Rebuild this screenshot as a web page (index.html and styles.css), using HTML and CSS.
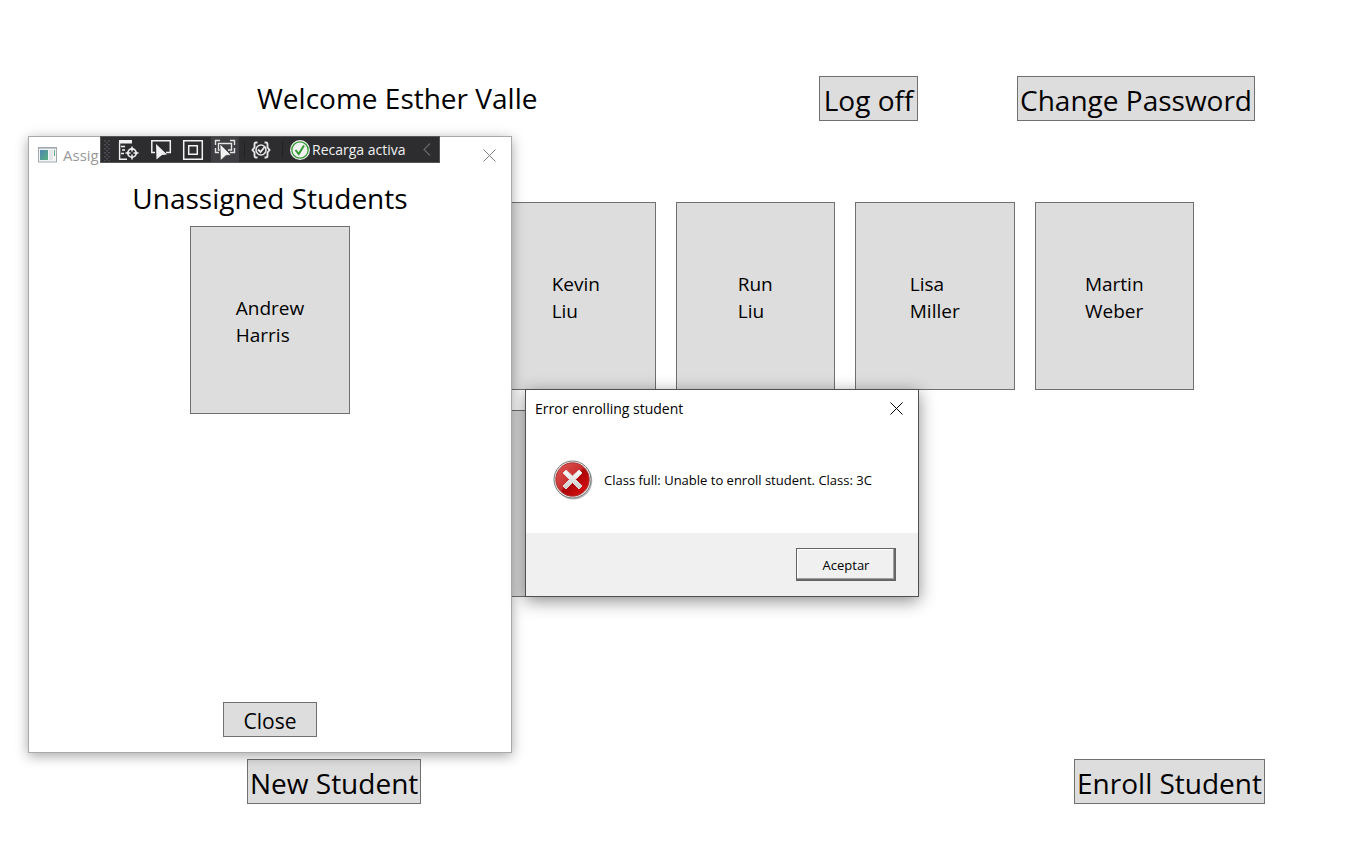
FILE: index.html
```html
<!DOCTYPE html>
<html lang="en">
<head>
<meta charset="utf-8">
<title>Students</title>
<link rel="stylesheet" href="styles.css">
</head>
<body>
<div class="page">
  <header class="page-header">
    <h1 class="heading">Welcome Esther Valle</h1>
    <div class="header-actions">
      <button class="btn btn-large" type="button">Log off</button>
      <button class="btn btn-large" type="button">Change Password</button>
    </div>
  </header>

  <main class="students">
    <button class="card card-third" type="button"><span>Kevin<br>Liu</span></button>
    <button class="card" type="button"><span>Run<br>Liu</span></button>
    <button class="card" type="button"><span>Lisa<br>Miller</span></button>
    <button class="card" type="button"><span>Martin<br>Weber</span></button>
    <div class="card card-third card-back"></div>
    <div class="card card-back"></div>
  </main>

  <footer class="page-footer">
    <button class="btn btn-large" type="button">New Student</button>
    <button class="btn btn-large" type="button">Enroll Student</button>
  </footer>
</div>

<section class="window assign-window">
  <div class="titlebar assign-titlebar">
    <svg class="app-icon" width="19" height="16" viewBox="0 0 19 16" aria-hidden="true">
      <defs><linearGradient id="app" x1="0" y1="0" x2="1" y2="1"><stop offset="0" stop-color="#4f86b5"/><stop offset="1" stop-color="#55b07a"/></linearGradient></defs>
      <rect x=".5" y=".5" width="18" height="14.500" fill="#f3f5f7" stroke="#a3a8ad"/>
      <path d="M1 1.500h17" stroke="#bfc6cc"/>
      <rect x="2" y="3" width="8" height="10" fill="url(#app)"/>
      <path d="M11 3h4v10h-4z" fill="#e4e7ea"/>
      <path d="M16.500 3v6" stroke="#5caf87"/>
    </svg>
    <span class="assign-title">Assig</span>
    <button class="close" type="button" aria-label="Close window">
      <svg width="13" height="13" viewBox="0 0 13 13"><path d="M.5.5l12 12M12.500.5l-12 12" stroke="#808080" fill="none"/></svg>
    </button>
  </div>
  <div class="assign-body">
    <h2 class="heading">Unassigned Students</h2>
    <button class="card" type="button"><span>Andrew<br>Harris</span></button>
  </div>
  <button class="btn btn-close" type="button">Close</button>

  <div class="toolbar" role="toolbar">
    <svg class="grip" width="7" height="22" viewBox="0 0 7 22" aria-hidden="true">
      <path d="M1 1v21M5 1v21" stroke="#56565a" stroke-width="1.500" stroke-dasharray="1.500 2.500"/><path d="M3 3v19" stroke="#56565a" stroke-width="1.500" stroke-dasharray="1.500 2.500"/>
    </svg>
    <button class="tool tool-first" type="button" aria-label="Live visual tree">
      <svg width="22" height="22" viewBox="0 0 22 22" fill="none" stroke="#f1f1f1" stroke-width="1.400">
        <path d="M2 1h13v3.500H2z" fill="#f1f1f1" stroke="none"/>
        <path d="M2.600 3v17.300H10M4 7.500h4M5 11h3M4 14.500h3"/>
        <circle cx="15" cy="14" r="4.200" stroke-width="1.700"/>
        <path d="M15 7.500v5M15 15.500v5M8.500 14h5M16.500 14h5" stroke-width="1.500"/>
      </svg>
    </button>
    <button class="tool" type="button" aria-label="Select element">
      <svg width="22" height="22" viewBox="0 0 22 22" fill="none" stroke="#f1f1f1" stroke-width="1.500">
        <path d="M5 13.500H1.800V1.800h18.500v11.700H16"/>
        <path d="M6 5l11 10.500-5 .5-5.500 4.500z" fill="#f1f1f1" stroke="none"/>
      </svg>
    </button>
    <button class="tool" type="button" aria-label="Display layout adorners">
      <svg width="22" height="22" viewBox="0 0 22 22" fill="none" stroke="#f1f1f1" stroke-width="1.500">
        <path d="M1.700 1.700h18.600v18.600H1.700zM6.700 6.700h8.600v8.600H6.700z"/>
      </svg>
    </button>
    <button class="tool tool-active" type="button" aria-label="Track focused element">
      <svg width="22" height="22" viewBox="0 0 22 22" fill="none" stroke="#e4e4e4" stroke-width="1.400">
        <path d="M1.500 6V1.500H6M16 1.500h4.500V6M1.500 9v4.500H5M20.500 9v4.500H16M6 11H4.500V4.500h13V11H14"/>
        <path d="M6 5l11 11-5 .5-5.500 5z" fill="#f1f1f1" stroke="#3e3e42" stroke-width=".6"/>
      </svg>
    </button>
    <span class="divider"></span>
    <button class="tool tool-wide" type="button" aria-label="Binding failures">
      <svg width="20" height="20" viewBox="0 0 20 20" fill="none" stroke="#e4e4e4" stroke-width="1.900">
        <path d="M6.500 2.500H5Q3.500 2.500 3.500 4.500v3L1.500 10l2 2.500v3q0 2 1.500 2h1.500M13.500 2.500H15q1.500 0 1.500 2v3l2 2.500-2 2.500v3q0 2-1.500 2h-1.500"/>
        <circle cx="10" cy="10" r="5" stroke-width="1.600"/>
        <path d="M7 9.500l2.500 2.500L14 6.500"/>
      </svg>
    </button>
    <span class="divider"></span>
    <button class="reload" type="button">
      <svg width="20" height="20" viewBox="0 0 20 20" aria-hidden="true">
        <circle cx="10" cy="10" r="10" fill="#f1f1f1"/>
        <circle cx="10" cy="10" r="8.200" fill="none" stroke="#339933" stroke-width="1.300"/>
        <path d="M5.500 10l3.200 4L14 5.500" fill="none" stroke="#339933" stroke-width="2"/>
      </svg>
      Recarga activa
    </button>
    <button class="collapse" type="button" aria-label="Collapse toolbar">
      <svg width="8" height="13" viewBox="0 0 8 13"><path d="M7 .5l-6 6 6 6" fill="none" stroke="#66666a" stroke-width="1.200"/></svg>
    </button>
  </div>
</section>

<section class="window error-dialog" role="dialog" aria-labelledby="error-title">
  <div class="titlebar error-titlebar">
    <span id="error-title">Error enrolling student</span>
    <button class="close" type="button" aria-label="Close dialog">
      <svg width="13" height="13" viewBox="0 0 13 13"><path d="M.5.5l12 12M12.500.5l-12 12" stroke="#000" fill="none"/></svg>
    </button>
  </div>
  <div class="error-body">
    <svg width="40" height="40" viewBox="0 0 40 40" aria-hidden="true">
      <defs>
        <linearGradient id="red" x1="0" y1="0" x2="1" y2="1"><stop offset="0" stop-color="#e05a58"/><stop offset=".48" stop-color="#c92e2e"/><stop offset=".52" stop-color="#a90507"/><stop offset="1" stop-color="#e51313"/></linearGradient>
        <linearGradient id="cross" x1="0" y1="0" x2="0" y2="1"><stop offset="0" stop-color="#fff"/><stop offset="1" stop-color="#c9c9c9"/></linearGradient>
      </defs>
      <circle cx="20.500" cy="20.800" r="18.800" fill="#bbb"/>
      <circle cx="19.500" cy="19.500" r="18.500" fill="#eee" stroke="#777"/>
      <circle cx="19.500" cy="19.500" r="16.700" fill="url(#red)" stroke="#a33"/>
      <path d="M13 10l6.500 6 6.500-6 3 3-6.500 6.500L29 26l-3 3-6.500-6.500L13 29l-3-3 6.500-6.500L10 13z" fill="url(#cross)" stroke="#ddd" stroke-linejoin="round"/>
    </svg>
    <p class="message">Class full: Unable to enroll student. Class: 3C</p>
  </div>
  <div class="error-footer">
    <button class="accept" type="button">Aceptar</button>
  </div>
</section>
</body>
</html>
```

FILE: styles.css
```css
* { box-sizing: border-box; }

body {
  margin: 0;
  background: #fff;
  color: #000;
  font-family: "Open Sans", "Noto Sans", sans-serif;
}

button {
  margin: 0;
  padding: 0;
  border: 0;
  background: none;
  color: inherit;
  font-family: inherit;
}

svg { display: block; flex: none; }

.page {
  display: flex;
  flex-direction: column;
  min-height: 100vh;
}

.page-header {
  display: flex;
  justify-content: space-between;
  padding: 76px 112px 0 257px;
}

.header-actions {
  display: flex;
  gap: 99px;
}

.heading {
  margin: 0;
  font-size: 28px;
  line-height: 44px;
  font-weight: 400;
  white-space: nowrap;
}

.btn {
  border: 1px solid #707070;
  background: #ddd;
  white-space: nowrap;
}

.btn-large {
  min-width: 99px;
  padding: 3px 2px 0;
  font-size: 28px;
  line-height: 40px;
}

.students {
  display: grid;
  grid-template-columns: repeat(6, 1fr);
  gap: 20px;
  padding: 81px 173px 0 137px;
}

.card {
  display: flex;
  align-items: center;
  justify-content: center;
  height: 188px;
  padding-top: 3px;
  border: 1px solid #707070;
  background: #ddd;
  font-size: 19px;
  line-height: 27px;
  text-align: left;
}

.card-third { grid-column-start: 3; }

.card-back { height: 187px; }

.page-footer {
  display: flex;
  justify-content: space-between;
  margin-top: auto;
  padding: 0 102px 63px 247px;
}

.window {
  position: absolute;
  display: flex;
  flex-direction: column;
  background: #fff;
}

.titlebar {
  display: flex;
  align-items: center;
}

.close { margin-left: auto; }

.assign-window {
  left: 28px;
  top: 136px;
  width: 484px;
  height: 617px;
  border: 1px solid #aaa;
  box-shadow: 0 3px 12px rgba(0, 0, 0, .35);
}

.assign-titlebar {
  gap: 6px;
  height: 36px;
  padding: 0 15px 0 9px;
  color: #999;
  font-size: 15px;
}

.assign-body {
  display: flex;
  flex-direction: column;
  align-items: center;
  gap: 6px;
  padding-top: 3px;
}

.assign-body .card { width: 160px; }

.btn-close {
  align-self: center;
  margin-top: auto;
  margin-bottom: 15px;
  padding: 3px 20px 0;
  font-size: 21px;
  line-height: 30px;
}

.toolbar {
  position: absolute;
  left: 71px;
  top: -1px;
  display: flex;
  align-items: center;
  width: 340px;
  height: 27px;
  padding-left: 3px;
  border: 1px solid #555;
  background: #2d2d30;
  color: #f1f1f1;
}

.grip { margin-right: 5px; }

.tool {
  display: flex;
  align-items: center;
  justify-content: center;
  width: 32px;
  height: 25px;
}

.tool-first {
  width: 24px;
  margin-right: 5px;
}

.tool-active {
  width: 28px;
  margin-left: 2px;
  background: #3e3e42;
}

.divider {
  width: 1px;
  height: 17px;
  margin-left: 5px;
  background: #222224;
}

.reload {
  display: flex;
  align-items: center;
  gap: 2px;
  margin-left: 7px;
  font-size: 14px;
  line-height: 20px;
  white-space: nowrap;
}

.collapse {
  margin-left: auto;
  margin-right: 8px;
}

.error-dialog {
  left: 525px;
  top: 389px;
  width: 394px;
  height: 208px;
  border: 1px solid #505050;
  box-shadow: 0 4px 16px rgba(0, 0, 0, .45);
}

.error-titlebar {
  height: 37px;
  padding: 0 15px 0 9px;
  font-size: 14px;
}

.error-body {
  display: flex;
  flex: 1;
  align-items: center;
  gap: 11px;
  padding: 0 27px;
}

.message {
  margin: 0;
  font-size: 13px;
  line-height: 20px;
  white-space: nowrap;
}

.error-footer {
  display: flex;
  justify-content: flex-end;
  padding: 15px 22px;
  background: #f0f0f0;
}

.accept {
  width: 100px;
  height: 33px;
  border: 1px solid #646464;
  box-shadow: inset -1px -1px #696969, inset -2px -2px #a0a0a0, inset 1px 1px #fff;
  background: #f0f0f0;
  font-size: 13px;
}
```
